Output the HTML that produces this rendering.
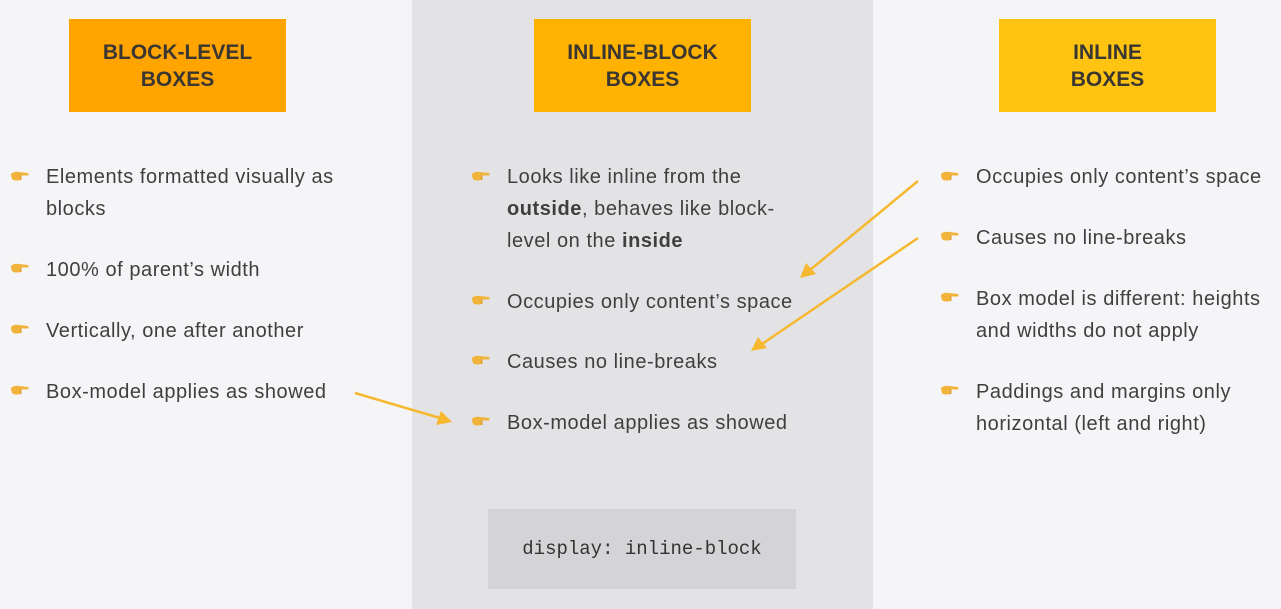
<!DOCTYPE html>
<html><head><meta charset="utf-8"><style>
body{margin:0;width:1281px;height:609px;background:#f5f4f7;font-family:"Liberation Sans",sans-serif;position:relative;overflow:hidden;color:#3f3f3f}
.mid{position:absolute;left:412px;top:0;width:461px;height:609px;background:#e3e2e5}
.box{position:absolute;top:19px;width:217px;height:93px;display:flex;align-items:center;justify-content:center;text-align:center;font-weight:bold;font-size:21px;line-height:27px;color:#3a3632}
.it{position:absolute;font-size:20px;letter-spacing:0.55px;line-height:32px;width:300px;margin-top:2px}
.code{position:absolute;left:488px;top:509px;width:308px;height:80px;background:#d4d3d6;display:flex;align-items:center;justify-content:center;font-family:"Liberation Mono",monospace;font-size:19px;color:#333}
</style></head><body>
<div class="mid"></div>
<div class="box" style="left:69px;background:#ffa400">BLOCK-LEVEL<br>BOXES</div>
<div class="box" style="left:534px;background:#ffb300">INLINE-BLOCK<br>BOXES</div>
<div class="box" style="left:999px;background:#ffc412">INLINE<br>BOXES</div>

<svg width="0" height="0" style="position:absolute"><defs><g id="hd"><path d="M1 4 Q4 1 9 2 L18 3 Q19 4.5 18 5.5 L11 5.5 L11 10 Q6 11 3 10 Q1 8 1 4Z" fill="#f2b33a"/><path d="M11 5.5 L11 10" stroke="#c98a1a" stroke-width="0.8"/></g></defs></svg>

<div class="it" style="left:46px;top:159px">Elements formatted visually as blocks</div>
<div class="it" style="left:46px;top:252px">100% of parent’s width</div>
<div class="it" style="left:46px;top:313px">Vertically, one after another</div>
<div class="it" style="left:46px;top:374px">Box-model applies as showed</div>

<div class="it" style="left:507px;top:159px;width:280px">Looks like inline from the <b>outside</b>, behaves like block-level on the <b>inside</b></div>
<div class="it" style="left:507px;top:284px">Occupies only content’s space</div>
<div class="it" style="left:507px;top:344px">Causes no line-breaks</div>
<div class="it" style="left:507px;top:405px">Box-model applies as showed</div>

<div class="it" style="left:976px;top:159px">Occupies only content’s space</div>
<div class="it" style="left:976px;top:220px">Causes no line-breaks</div>
<div class="it" style="left:976px;top:281px;width:305px">Box model is different: heights and widths do not apply</div>
<div class="it" style="left:976px;top:374px;width:290px">Paddings and margins only horizontal (left and right)</div>

<svg style="position:absolute;left:0;top:0" width="1281" height="609">
<g transform="translate(10,170)"><use href="#hd"/></g>
<g transform="translate(10,262)"><use href="#hd"/></g>
<g transform="translate(10,323)"><use href="#hd"/></g>
<g transform="translate(10,384)"><use href="#hd"/></g>
<g transform="translate(471,170)"><use href="#hd"/></g>
<g transform="translate(471,294)"><use href="#hd"/></g>
<g transform="translate(471,354)"><use href="#hd"/></g>
<g transform="translate(471,415)"><use href="#hd"/></g>
<g transform="translate(940,170)"><use href="#hd"/></g>
<g transform="translate(940,230)"><use href="#hd"/></g>
<g transform="translate(940,291)"><use href="#hd"/></g>
<g transform="translate(940,384)"><use href="#hd"/></g>
<g stroke="#f5b82e" stroke-width="2.5" fill="#f5b82e">
<line x1="355" y1="393" x2="440" y2="418"/><polygon points="452,422 436,425 441,411" stroke="none"/>
<line x1="918" y1="181" x2="810" y2="270"/><polygon points="800,278 806,263 816,274" stroke="none"/>
<line x1="918" y1="238" x2="762" y2="344"/><polygon points="751,351 758,337 767,348" stroke="none"/>
</g>
</svg>
<div class="code">display: inline-block</div>
</body></html>
